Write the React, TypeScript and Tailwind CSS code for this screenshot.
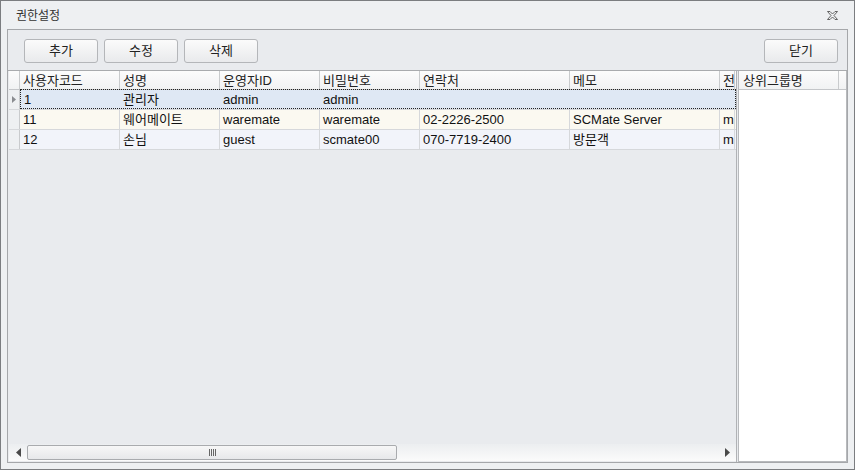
import React from "react";

const F = { fontFamily: '"Liberation Sans", "Noto Sans CJK KR", sans-serif' };

const cols = [
  { w: 100, h: "사용자코드" },
  { w: 100, h: "성명" },
  { w: 100, h: "운영자ID" },
  { w: 100, h: "비밀번호" },
  { w: 150, h: "연락처" },
  { w: 150, h: "메모" },
  { w: 15, h: "전" },
];

const rows = [
  ["1", "관리자", "admin", "admin", "", "", ""],
  ["11", "웨어메이트", "waremate", "waremate", "02-2226-2500", "SCMate Server", "m"],
  ["12", "손님", "guest", "scmate00", "070-7719-2400", "방문객", "m"],
];

function Btn({ label }: { label: string }) {
  return (
    <div className="w-[74px] h-[24px] rounded-[3px] border border-[#b4b6b9] bg-gradient-to-b from-[#fbfbfb] to-[#e9eaec] flex items-center justify-center text-[13px] text-[#222]">
      {label}
    </div>
  );
}

export default function App() {
  return (
    <div style={F} className="w-[855px] h-[470px] border border-[#7b7d80] bg-[#eef0f2] flex flex-col text-[#111] overflow-hidden">
      <div className="h-[28px] flex items-center justify-between pl-[15px] pr-[16px] pt-[1px]">
        <span className="text-[12px] text-[#333]">권한설정</span>
        <svg width="11" height="9" viewBox="0 0 11 9">
          <path d="M0.5 0.5 H3 L5.5 3 L8 0.5 H10.5 L7 4.5 L10.5 8.5 H8 L5.5 6 L3 8.5 H0.5 L4 4.5 Z" fill="none" stroke="#555" strokeWidth="0.9" />
        </svg>
      </div>
      <div className="mx-[6px] mb-[6px] flex-1 border border-[#a5a7aa] bg-[#e9ebee] flex flex-col min-h-0">
        <div className="h-[40px] flex items-center justify-between pl-[16px] pr-[9px] pt-[1px]">
          <div className="flex gap-[6px]">
            <Btn label="추가" />
            <Btn label="수정" />
            <Btn label="삭제" />
          </div>
          <Btn label="닫기" />
        </div>
        <div className="flex-1 flex min-h-0 border-t border-[#a9abae]">
          <div className="w-[728px] ml-[1px] border-r border-[#b0b2b5] flex flex-col">
            <div className="flex h-[19px] bg-gradient-to-b from-[#fcfcfc] to-[#f1f2f3] border-b border-[#c4c6c9] text-[13px]">
              <div className="w-[11px] border-r border-[#c9cbcd]" />
              {cols.map((c, i) => (
                <div key={i} style={{ width: c.w }} className="border-r border-[#c9cbcd] pl-[3px] leading-[19px] overflow-hidden whitespace-nowrap text-[#222]">
                  {c.h}
                </div>
              ))}
            </div>
            {rows.map((r, ri) => (
              <div
                key={ri}
                className={
                  "flex h-[20px] text-[13px] border-b border-[#d6d8db] " +
                  (ri === 0 ? "bg-[#dfe8f4]" : ri === 1 ? "bg-[#fbf9f1]" : "bg-[#f2f4fa]")
                }
              >
                <div className="w-[11px] border-r border-[#c9cbcd] bg-[#eef0f2] flex items-center justify-center">
                  {ri === 0 && (
                    <svg width="4" height="7" viewBox="0 0 4 7"><path d="M0 0 L4 3.5 L0 7 Z" fill="#8a8c90" /></svg>
                  )}
                </div>
                <div className={"flex flex-1 " + (ri === 0 ? "border border-dotted border-[#222] -mt-[1px] h-[20px]" : "")}>
                  {cols.map((c, i) => (
                    <div
                      key={i}
                      style={{ width: ri === 0 && i === 0 ? c.w - 1 : c.w }}
                      className={"pl-[3px] leading-[19px] overflow-hidden whitespace-nowrap " + (ri === 0 ? "" : "border-r border-[#d6d8db]")}
                    >
                      {r[i]}
                    </div>
                  ))}
                </div>
              </div>
            ))}
            <div className="flex-1" />
            <div className="h-[17px] flex items-center bg-gradient-to-b from-[#eceef0] to-[#fbfbfb] mb-[1px]">
              <div className="w-[18px] flex justify-center">
                <svg width="5" height="9" viewBox="0 0 5 9"><path d="M5 0 L0 4.5 L5 9 Z" fill="#4a4a4a" /></svg>
              </div>
              <div className="w-[370px] h-[15px] border border-[#a9abae] rounded-[2px] bg-gradient-to-b from-[#f7f7f7] to-[#e7e8ea] flex items-center justify-center">
                <svg width="7" height="7" viewBox="0 0 7 7">
                  <path d="M0.5 0 V7 M2.5 0 V7 M4.5 0 V7 M6.5 0 V7" stroke="#666" strokeWidth="1" />
                </svg>
              </div>
              <div className="flex-1" />
              <div className="w-[14px] flex justify-center mr-[2px]">
                <svg width="5" height="9" viewBox="0 0 5 9"><path d="M0 0 L5 4.5 L0 9 Z" fill="#4a4a4a" /></svg>
              </div>
            </div>
          </div>
          <div className="w-[110px] ml-[1px] border border-t-0 border-[#b7b9bc] bg-white flex flex-col">
            <div className="h-[19px] flex bg-gradient-to-b from-[#fcfcfc] to-[#f1f2f3] border-b border-[#c4c6c9] text-[13px]">
              <div className="w-[100px] border-r border-[#c9cbcd] pl-[4px] leading-[19px] whitespace-nowrap text-[#222]">상위그룹명</div>
              <div className="flex-1" />
            </div>
          </div>
        </div>
      </div>
    </div>
  );
}
